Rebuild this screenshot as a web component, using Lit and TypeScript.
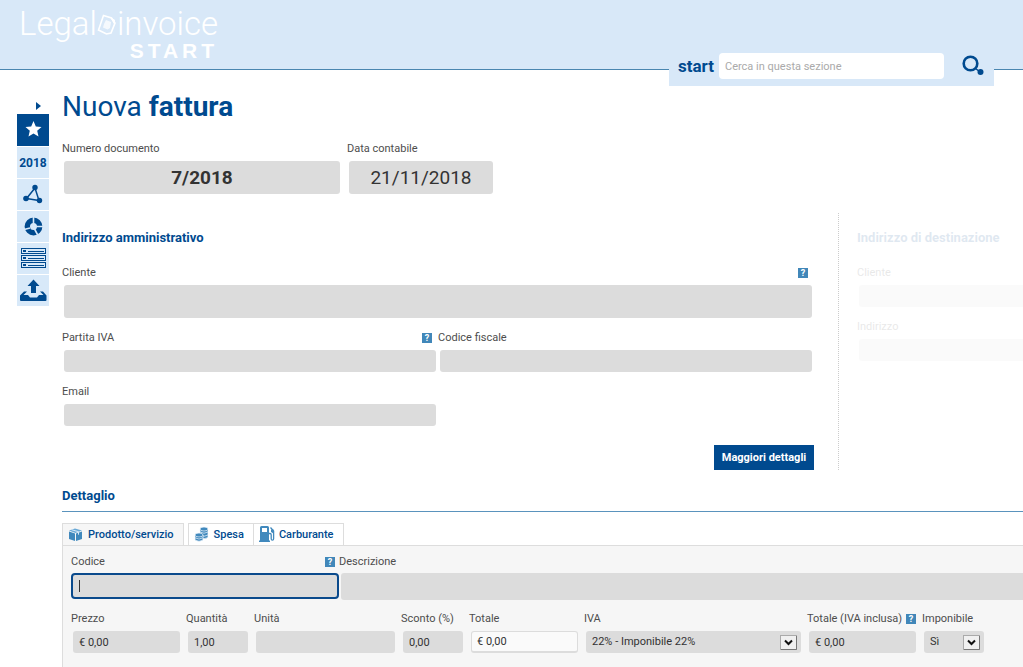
import { LitElement, html, css, svg, nothing } from "lit";
import type { TemplateResult } from "lit";
import { customElement, state } from "lit/decorators.js";
import { classMap } from "lit/directives/class-map.js";

interface FieldOptions {
  id: string;
  label: string;
  value?: string;
  kind?: string;
  help?: boolean;
}

const starIcon = svg`<path d="M16.500 6l2.300 5.400 5.700.5-4.300 3.800 1.300 5.800-5-3-5 3 1.300-5.800-4.300-3.800 5.700-.5z" fill="#fff"/>`;
const graphIcon = svg`<path d="M18 9L9.500 19.500L22 21.500Z" fill="none" stroke="#004a8f" stroke-width="1.500"/>
  <circle cx="18" cy="8.500" r="2.700"/><circle cx="9" cy="19.500" r="2.800"/><circle cx="22.500" cy="21.500" r="2.700"/>`;
const donutIcon = svg`<circle cx="16.500" cy="15.500" r="6.200" fill="none" stroke="#004a8f" stroke-width="5.400"/>
  <path d="M16.500 6v7M7 18.500l6-1.500M19 15.500h7.500M17.500 18l3.500 6.500" stroke="#d8e9f9" stroke-width="1.600"/>`;
const serverIcon = svg`<g fill="none" stroke="#004a8f" stroke-width="1">
  <rect x="4.500" y="5.500" width="24" height="5"/><rect x="4.500" y="12.500" width="24" height="5"/><rect x="4.500" y="19.500" width="24" height="5"/>
  <path d="M11 8.500h16M11 15.500h16M11 22.500h16"/></g>
  <path d="M6 7h3v2H6zM6 14h3v2H6zM6 21h3v2H6z"/>`;
const uploadIcon = svg`<path d="M16.500 4.500l6 6.500H19v7h-5v-7h-3.500z"/>
  <path d="M7 16.500h3L6.500 20H11l2 2.500h7l2-2.500h4.500L23 16.500h3l3.500 4V25q0 1-1 1H4q-1 0-1-1v-4.500z"/>`;

const boxIcon = svg`<path d="M1 4.500L7 2.500l7 2L7.500 7z" fill="#6aa9d6"/><path d="M1 5.500l6 2v7.500L1 13zM14 5.500L8 7.500V15l6-2z" fill="#4189bd"/>
  <path d="M3.500 3.700l7 2v3" fill="none" stroke="#d8e9f9"/>`;
const coinsIcon = svg`<g fill="#4189bd" stroke="#f2f8fd" stroke-width=".7">
  <path d="M6 3v8.500q4 2.500 8 0V3z"/><ellipse cx="10" cy="3" rx="4" ry="2"/>
  <path d="M6 6q4 2.500 8 0M6 9q4 2.500 8 0"/>
  <path d="M1 9v5q4 2.500 8 0V9z"/><ellipse cx="5" cy="9" rx="4" ry="2"/><path d="M1 11.800q4 2.500 8 0"/></g>`;
const fuelIcon = svg`<path d="M0 16v-1.500h1V1.500q0-1.500 1.500-1.500h6Q10 0 10 1.500v13h1V16zM3 2v4h5V2z" fill="#4189bd" fill-rule="evenodd"/>
  <path d="M10 7.500h1q1.200 0 1.200 1.200v4q0 1.500 1.200 1.500t1.200-1.500V5L11.500 1.500" fill="none" stroke="#4189bd" stroke-width="1.300"/><path d="M12 3.500h2.500v4L12 6z" fill="#4189bd"/>`;

@customElement("app-root")
export class AppRoot extends LitElement {
  @state() private activeTab = 0;

  static styles = css`
    :host {
      display: block;
      min-height: 100vh;
      overflow: hidden;
      background: #fff;
      color: #4d4d4d;
      font: 11px/16px Roboto, sans-serif;
    }
    * { box-sizing: border-box; }
    button, input, select { font: inherit; color: inherit; margin: 0; }
    svg { display: block; flex: none; }

    .header {
      position: relative;
      display: flex;
      min-height: 70px;
      padding: 8px 20px 0 19px;
      background: #d8e8f8;
      border-bottom: 1px solid #4a86b0;
    }
    .logo { display: flex; flex-direction: column; align-items: flex-end; color: #fff; text-decoration: none; }
    .logo-name { display: flex; align-items: center; font: 300 33px/32px Roboto, sans-serif; }
    .logo-sub { font: bold 21px/22px "Liberation Sans", sans-serif; letter-spacing: 4px; }
    .search {
      position: absolute;
      right: 29px;
      bottom: -17px;
      display: flex;
      align-items: center;
      width: 325px;
      padding: 4px 9px 7px;
      background: #d8e8f8;
    }
    .search-label { color: #004a8f; font-size: 17px; font-weight: 700; line-height: 26px; margin-right: 5px; }
    .search-input {
      flex: 1;
      min-width: 0;
      height: 26px;
      padding: 0 6px;
      border: 0;
      border-radius: 4px;
      background: #fff;
      outline: none;
    }
    .search-input::placeholder { color: #aaa; opacity: 1; }
    .icon-button { border: 0; padding: 0; background: none; cursor: pointer; }
    .search-button { margin-left: 18px; }

    .layout { display: flex; }
    .sidebar { display: flex; flex-direction: column; gap: 1px; width: 32px; margin: 32px 13px 0 17px; flex: none; }
    .toggle { display: flex; height: 11px; padding-left: 19px; }
    .side-item {
      display: flex;
      align-items: center;
      justify-content: center;
      height: 31px;
      background: #d8e9f9;
      fill: #004a8f;
      color: #004a8f;
      font-size: 12px;
      font-weight: 700;
      text-decoration: none;
    }
    .side-item.current { height: 32px; background: #004a8f; }

    .main { flex: 1; min-width: 0; padding-top: 21px; }
    .title { margin: 0; color: #004a8f; font-size: 28px; line-height: 32px; font-weight: 400; }
    .title-strong { font-weight: 700; }
    .document { display: flex; margin-top: 17px; }
    .number { width: 280px; margin-right: 5px; }
    .date { width: 148px; }

    .field { min-width: 0; padding-right: 2px; }
    .field-head { display: flex; align-items: center; justify-content: space-between; height: 18px; margin-bottom: 3px; }
    .field-label { white-space: nowrap; }
    .help {
      width: 10px;
      height: 10px;
      margin-right: 4px;
      background: #4187b9;
      color: #fff;
      font-size: 9px;
      font-weight: 700;
      line-height: 10px;
      text-align: center;
    }
    .control {
      display: block;
      width: calc(100% - 2px);
      height: 22px;
      margin-left: 2px;
      padding: 0 6px;
      border: 0;
      border-radius: 3px;
      background: #dcdcdc;
      color: #333;
      outline: none;
      appearance: none;
    }
    .tall { height: 33px; }
    .big { height: 33px; font-size: 19px; text-align: center; }
    .strong { font-weight: 700; }

    .addresses { display: grid; grid-template-columns: minmax(0, 777fr) minmax(0, 184fr); margin-top: 19px; }
    .billing { padding: 16px 24px 0 0; border-right: 1px dotted #ccc; min-height: 257px; }
    .shipping { padding: 16px 0 0 18px; opacity: 0.12; }
    .shipping .field { padding-right: 0; }
    .shipping .control { border-radius: 3px 0 0 3px; }
    .heading { margin: 0; color: #004a8f; font-size: 13px; line-height: 18px; font-weight: 700; white-space: nowrap; }
    .row { display: grid; grid-template-columns: 1fr 1fr; }
    .stack { display: grid; gap: 11px; margin-top: 17px; }
    .more {
      display: block;
      width: 100px;
      height: 25px;
      margin: 19px 0 0 auto;
      padding: 0;
      border: 0;
      background: #004a8f;
      color: #fff;
      font-weight: 700;
      white-space: nowrap;
      cursor: pointer;
    }

    .detail-title { padding: 17px 0 6px; border-bottom: 1px solid #5a93bd; }
    .tabs { display: flex; margin-top: 11px; }
    .tab {
      display: flex;
      align-items: center;
      gap: 4px;
      height: 22px;
      padding: 0 9px 0 5px;
      border: 1px solid #ddd;
      border-bottom: 0;
      background: #fff;
      color: #004a8f;
      font-weight: 500;
      white-space: nowrap;
      cursor: pointer;
    }
    .tab.selected { background: #f6f6f6; }
    .tab:first-child { margin-right: 4px; }
    .tab + .tab + .tab { border-left: 0; }
    .panel { min-height: 130px; padding: 7px 0 13px 8px; border: 1px solid #ddd; border-right: 0; background: #f6f6f6; }
    .line-one { display: grid; grid-template-columns: minmax(0, 268fr) minmax(0, 684fr); }
    .line-one .field { padding-right: 0; }
    .line-one .field-head { margin-bottom: 2px; }
    .line-one .control { height: 27px; border-radius: 3px 0 0 3px; }
    .line-one .field:first-child .control {
      width: 100%;
      height: 26px;
      margin-left: 0;
      border: 2px solid #0a4a8c;
      border-radius: 4px;
      background: #dcdcdc linear-gradient(#333, #333) no-repeat 6px 50% / 1px 12px;
    }
    .line-two {
      display: grid;
      grid-template-columns: 115fr 68fr 147fr 68fr 115fr 223fr 115fr 68fr 33fr;
      margin-top: 10px;
    }
    .line-two .field { padding-right: 6px; }
    .line-two .help { margin-right: 0; }
    .outlined { border: 1px solid #dcdcdc; border-bottom-width: 2px; background: #fafafa; padding: 0 5px; }
    .select-box { position: relative; }
    .select-arrow { position: absolute; top: 4px; right: 4px; pointer-events: none; }
  `;

  private field(o: FieldOptions): TemplateResult {
    return html`<div class="field">
      <div class="field-head">
        <label class="field-label" for=${o.id}>${o.label}</label>
        ${o.help ? html`<button class="icon-button help" aria-label="Aiuto">?</button>` : nothing}
      </div>
      <input class="control ${o.kind ?? ""}" id=${o.id} type="text" .value=${o.value ?? ""} />
    </div>`;
  }

  private choice(id: string, label: string, options: string[]): TemplateResult {
    return html`<div class="field">
      <div class="field-head"><label class="field-label" for=${id}>${label}</label></div>
      <div class="select-box">
        <select class="control" id=${id}>${options.map((o) => html`<option>${o}</option>`)}</select>
        <svg class="select-arrow" width="17" height="15" viewBox="0 0 17 15" aria-hidden="true">
          <rect x=".5" y=".5" width="16" height="14" fill="#f0f0f0" stroke="#aaa" />
          <path d="M16.500 1v13.500H1" fill="none" stroke="#777" />
          <path d="M5 5.500l3.500 3.500L12 5.500" fill="none" stroke="#111" stroke-width="2" />
        </svg>
      </div>
    </div>`;
  }

  private side(name: string, content: unknown, current = false): TemplateResult {
    return html`<a class=${classMap({ "side-item": true, current })} href="#" aria-label=${name}>${content}</a>`;
  }

  private sideIcon(shape: unknown): TemplateResult {
    return html`<svg width="32" height="31" viewBox="0 0 32 31">${shape}</svg>`;
  }

  render() {
    const tabs: [string, unknown][] = [["Prodotto/servizio", boxIcon], ["Spesa", coinsIcon], ["Carburante", fuelIcon]];
    return html`
      <header class="header">
        <a class="logo" href="#">
          <span class="logo-name">Legal<svg width="20" height="24" viewBox="0 0 20 24" aria-hidden="true">
            <path d="M6.500 3.500l8 2.500 3.500 5-4 10-4.500 1-8-4z" fill="none" stroke="#fff" stroke-width="1.600" />
            <path d="M7 12l2-4 5 2-1 6-2.500 1.500-4.500-2z" fill="#fff" opacity=".75" />
            <path d="M13 5l5 3-.5 5z" fill="#fff" /></svg>invoice</span>
          <span class="logo-sub">START</span>
        </a>
        <form class="search" @submit=${(e: Event) => e.preventDefault()}>
          <label class="search-label" for="q">start</label>
          <input class="search-input" id="q" type="text" placeholder="Cerca in questa sezione" />
          <button class="icon-button search-button" aria-label="Cerca">
            <svg width="23" height="22" viewBox="0 0 23 22"><circle cx="8.500" cy="8.500" r="6.800" fill="none" stroke="#004a8f" stroke-width="2.600" /><circle cx="18.500" cy="17" r="3" fill="#004a8f" /><path d="M13.500 13.500l4 3" stroke="#004a8f" stroke-width="1.500" /></svg>
          </button>
        </form>
      </header>
      <div class="layout">
        <nav class="sidebar">
          <button class="icon-button toggle" aria-label="Apri menu"><svg width="5" height="8" viewBox="0 0 5 8"><path d="M0 0l5 4-5 4z" fill="#004a8f" /></svg></button>
          ${this.side("Preferiti", this.sideIcon(starIcon), true)}
          ${this.side("Anno 2018", "2018")}
          ${this.side("Rete", this.sideIcon(graphIcon))}
          ${this.side("Statistiche", this.sideIcon(donutIcon))}
          ${this.side("Archivio", this.sideIcon(serverIcon))}
          ${this.side("Carica", this.sideIcon(uploadIcon))}
        </nav>
        <main class="main">
          <h1 class="title">Nuova <span class="title-strong">fattura</span></h1>
          <div class="document">
            <div class="number">${this.field({ id: "num", label: "Numero documento", value: "7/2018", kind: "big strong" })}</div>
            <div class="date">${this.field({ id: "date", label: "Data contabile", value: "21/11/2018", kind: "big" })}</div>
          </div>
          <div class="addresses">
            <section class="billing">
              <h2 class="heading">Indirizzo amministrativo</h2>
              <div class="stack">
                ${this.field({ id: "client", label: "Cliente", kind: "tall", help: true })}
                <div class="row">
                  ${this.field({ id: "vat", label: "Partita IVA", help: true })}
                  ${this.field({ id: "cf", label: "Codice fiscale" })}
                </div>
                <div class="row">${this.field({ id: "mail", label: "Email" })}</div>
              </div>
              <button class="more">Maggiori dettagli</button>
            </section>
            <section class="shipping">
              <h2 class="heading">Indirizzo di destinazione</h2>
              <div class="stack">
                ${this.field({ id: "client2", label: "Cliente" })}
                ${this.field({ id: "addr2", label: "Indirizzo" })}
              </div>
            </section>
          </div>
          <h2 class="heading detail-title">Dettaglio</h2>
          <div class="tabs" role="tablist">
            ${tabs.map(([name, icon], i) => html`<button
              class=${classMap({ tab: true, selected: i === this.activeTab })}
              role="tab" aria-selected=${i === this.activeTab} @click=${() => (this.activeTab = i)}
            ><svg width="16" height="18" viewBox="0 0 16 18" aria-hidden="true">${icon}</svg>${name}</button>`)}
          </div>
          <section class="panel">
            <div class="line-one">
              ${this.field({ id: "code", label: "Codice", help: true })}
              ${this.field({ id: "desc", label: "Descrizione" })}
            </div>
            <div class="line-two">
              ${this.field({ id: "price", label: "Prezzo", value: "€ 0,00" })}
              ${this.field({ id: "qty", label: "Quantità", value: "1,00" })}
              ${this.field({ id: "unit", label: "Unità" })}
              ${this.field({ id: "disc", label: "Sconto (%)", value: "0,00" })}
              ${this.field({ id: "tot", label: "Totale", value: "€ 0,00", kind: "outlined" })}
              ${this.choice("iva", "IVA", ["22% - Imponibile 22%"])}
              ${this.field({ id: "totiva", label: "Totale (IVA inclusa)", value: "€ 0,00", help: true })}
              ${this.choice("taxable", "Imponibile", ["Sì", "No"])}
            </div>
          </section>
        </main>
      </div>
    `;
  }
}
